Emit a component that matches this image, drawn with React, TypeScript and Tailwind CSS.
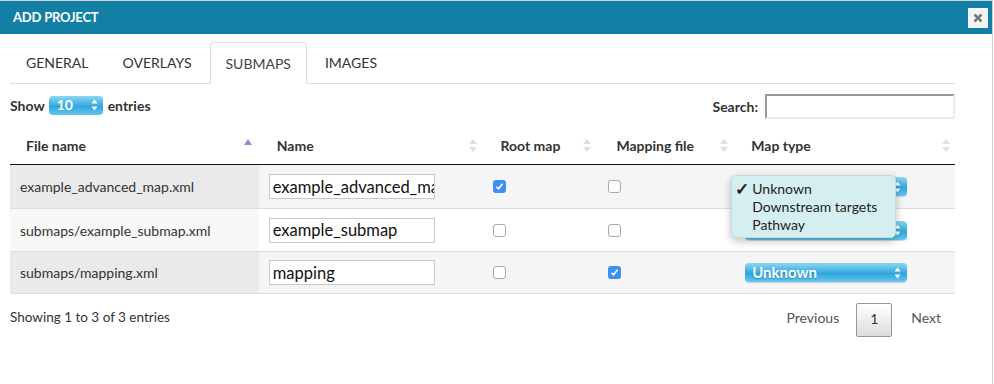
import React from 'react';

function SortBoth() {
  return (
    <svg width="8" height="13" viewBox="0 0 8 13" className="shrink-0">
      <path d="M4 0 L8 5 L0 5 Z" fill="#e0e0e0" />
      <path d="M4 13 L8 8 L0 8 Z" fill="#e0e0e0" />
    </svg>
  );
}

function SortAsc() {
  return (
    <svg width="8" height="13" viewBox="0 0 8 13" className="shrink-0">
      <path d="M4 0 L8 6 L0 6 Z" fill="#8b8bdc" />
    </svg>
  );
}

function Spinner() {
  return (
    <svg width="7" height="12" viewBox="0 0 7 12" className="shrink-0">
      <path d="M3.5 0.5 L6.5 4.5 L0.5 4.5 Z" fill="#ffffff" />
      <path d="M3.5 11.5 L6.5 7.5 L0.5 7.5 Z" fill="#ffffff" />
    </svg>
  );
}

function Checkbox({ checked }: { checked: boolean }) {
  if (checked) {
    return (
      <div className="w-[13px] h-[13px] rounded-[3px] bg-[#3f8ef2] flex items-center justify-center">
        <svg width="9" height="9" viewBox="0 0 9 9">
          <path d="M1.5 4.8 L3.6 6.8 L7.5 1.8" stroke="#fff" strokeWidth="1.6" fill="none" />
        </svg>
      </div>
    );
  }
  return <div className="w-[13px] h-[13px] rounded-[3px] bg-white border border-[#a9a9a9]" />;
}

function MapTypeSelect({ label }: { label: boolean }) {
  return (
    <div className="w-[162px] h-[19px] rounded-[4px] bg-[linear-gradient(#8fd6f2,#3fb1e2_45%,#2ea6dc_55%,#66c6ee)] flex items-center justify-between pl-[7px] pr-[6px] shadow-[0_1px_1px_rgba(0,0,0,0.15)]">
      <span className="text-white font-bold text-[15px] leading-none [text-shadow:0_1px_1px_rgba(0,0,0,0.25)]">
        {label ? 'Unknown' : ''}
      </span>
      <Spinner />
    </div>
  );
}

const rows = [
  { file: 'example_advanced_map.xml', name: 'example_advanced_map', root: true, mapping: false },
  { file: 'submaps/example_submap.xml', name: 'example_submap', root: false, mapping: false },
  { file: 'submaps/mapping.xml', name: 'mapping', root: false, mapping: true },
];

export default function App() {
  return (
    <div className="w-[994px] h-[384px] bg-white overflow-hidden font-[Lato,sans-serif] text-[#333]">
      <div className="w-[993px] h-full border-r border-[#cfcfcf] border-t border-t-[#d4d4d4]">
        {/* Header */}
        <div className="h-[33px] bg-[#137fa5] flex items-center justify-between pl-[13px] pr-[4px]">
          <span className="text-white font-bold text-[13px] tracking-[-0.2px]">ADD PROJECT</span>
          <div className="w-[20px] h-[20px] bg-[#f4f4f4] flex items-center justify-center">
            <svg width="10" height="10" viewBox="0 0 10 10">
              <path d="M1.5 1.5 L8.5 8.5 M8.5 1.5 L1.5 8.5" stroke="#7a7a7a" strokeWidth="2.6" />
            </svg>
          </div>
        </div>

        <div className="pl-[10px] pr-[37px]">
          {/* Tabs */}
          <div className="mt-[8px] flex border-b border-[#dddddd] h-[42px]">
            {['GENERAL', 'OVERLAYS', 'SUBMAPS', 'IMAGES'].map((t) => (
              <div
                key={t}
                className={
                  t === 'SUBMAPS'
                    ? 'h-[42px] px-[15px] mr-[2px] flex items-center text-[14px] text-[#444] bg-white border border-[#dddddd] border-b-white rounded-t-[4px]'
                    : 'h-[41px] px-[15px] mr-[2px] flex items-center text-[14px] text-[#333] border border-transparent'
                }
              >
                {t}
              </div>
            ))}
          </div>

          {/* Show / search */}
          <div className="mt-[10px] flex justify-between items-start">
            <div className="flex items-center h-[20px] mt-[1px] text-[14px] font-bold">
              <span>Show</span>
              <div className="ml-[4px] mr-[5px] w-[54px] h-[19px] rounded-[4px] bg-[linear-gradient(#8fd6f2,#3fb1e2_45%,#2ea6dc_55%,#66c6ee)] flex items-center justify-between pl-[8px] pr-[5px]">
                <span className="text-white font-bold text-[14px] leading-none">10</span>
                <Spinner />
              </div>
              <span>entries</span>
            </div>
            <div className="flex items-center">
              <span className="text-[14px] font-bold mr-[7px]">Search:</span>
              <div className="w-[190px] h-[25px] border-2 border-[#ececec] border-t-[#9b9b9b] border-l-[#9b9b9b] bg-white" />
            </div>
          </div>

          {/* Table */}
          <div className="mt-[8px]">
            <div className="flex h-[38px] items-center border-b border-[#111] text-[14px] font-bold">
              <div className="w-[249px] pl-4 pr-[7px] flex items-center justify-between">
                <span>File name</span>
                <SortAsc />
              </div>
              <div className="w-[224px] pl-[18px] pr-[6px] flex items-center justify-between">
                <span>Name</span>
                <SortBoth />
              </div>
              <div className="w-[116px] pl-[18px] pr-[7px] flex items-center justify-between">
                <span>Root map</span>
                <SortBoth />
              </div>
              <div className="w-[135px] pl-[18px] pr-[5px] flex items-center justify-between">
                <span>Mapping file</span>
                <SortBoth />
              </div>
              <div className="w-[222px] pl-[18px] pr-[5px] flex items-center justify-between">
                <span>Map type</span>
                <SortBoth />
              </div>
            </div>

            {rows.map((r, i) => {
              const odd = i % 2 === 0;
              return (
                <div
                  key={r.file}
                  className={
                    'flex h-[43px] items-stretch text-[14px] ' +
                    (i === 0 ? '' : 'border-t border-[#dddddd] ') +
                    (i === rows.length - 1 ? 'border-b border-[#111] ' : '') +
                    (odd ? 'bg-[#f5f5f5]' : 'bg-white')
                  }
                >
                  <div className={'w-[249px] pl-[10px] flex items-center ' + (odd ? 'bg-[#eaeaea]' : 'bg-[#f8f8f8]')}>
                    {r.file}
                  </div>
                  <div className="w-[224px] pl-[10px] flex items-center">
                    <input
                      readOnly
                      value={r.name}
                      className="w-[166px] h-[25px] border border-[#c9c9c9] bg-white pl-[3px] text-[16.5px] text-[#111] outline-none font-[Lato,sans-serif]"
                    />
                  </div>
                  <div className="w-[116px] pl-[10px] flex items-center">
                    <Checkbox checked={r.root} />
                  </div>
                  <div className="w-[135px] pl-[10px] flex items-center">
                    <Checkbox checked={r.mapping} />
                  </div>
                  <div className="w-[222px] pl-[12px] flex items-center relative">
                    <MapTypeSelect label={i === 2} />
                    {i === 0 && (
                      <div className="absolute left-[-2px] top-[10px] w-[165px] h-[63px] rounded-[5px] bg-[#d5eff0] border border-[#c2dcdd] shadow-[0_3px_8px_rgba(0,0,0,0.25)] z-10 pt-[3px] text-[14px] text-[#222]">
                        <div className="h-[18px] flex items-center">
                          <span className="w-[20px] pl-[3px] text-[17px] font-bold leading-none">✓</span>
                          <span>Unknown</span>
                        </div>
                        <div className="h-[18px] flex items-center pl-[20px]">Downstream targets</div>
                        <div className="h-[18px] flex items-center pl-[20px]">Pathway</div>
                      </div>
                    )}
                  </div>
                </div>
              );
            })}
          </div>

          {/* Footer */}
          <div className="mt-[9px] flex justify-between items-start">
            <span className="text-[13.5px] mt-[4px]">Showing 1 to 3 of 3 entries</span>
            <div className="flex items-start text-[14px] text-[#555]">
              <span className="mr-[17px] mt-[4px]">Previous</span>
              <div className="w-[36px] h-[34px] border border-[#979797] rounded-[2px] bg-[linear-gradient(#ffffff,#dcdcdc)] flex items-center justify-center pb-[4px] text-[#333]">
                1
              </div>
              <span className="ml-[19px] mr-[14px] mt-[4px]">Next</span>
            </div>
          </div>
        </div>
      </div>
    </div>
  );
}
